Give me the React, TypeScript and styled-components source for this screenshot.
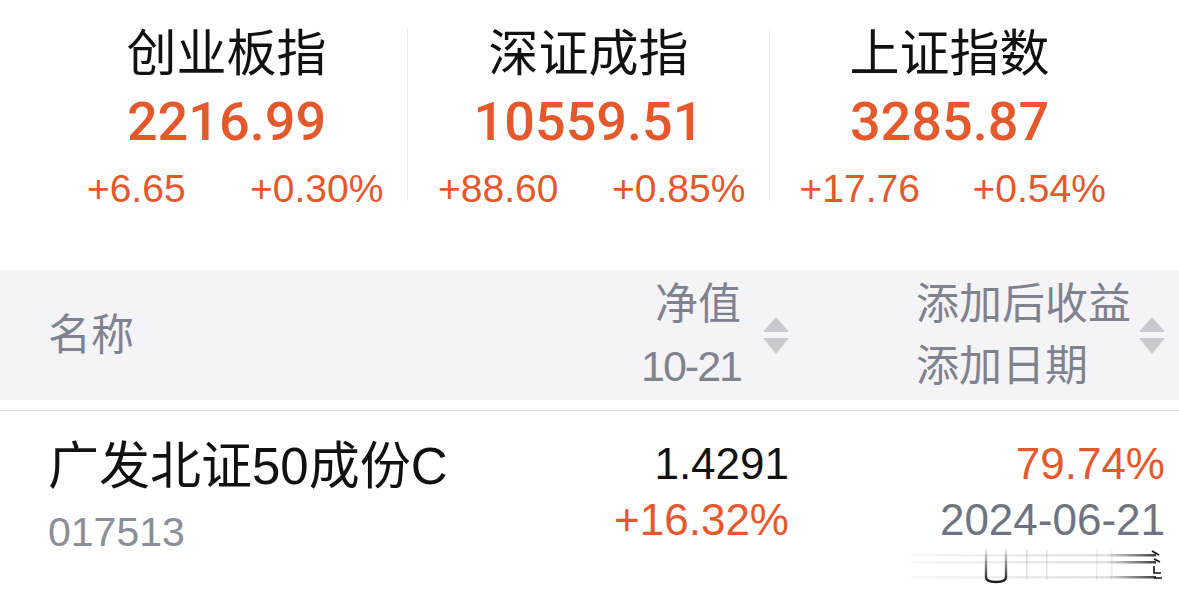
import styled, {createGlobalStyle} from 'styled-components';

const SANS = `"Liberation Sans", "Noto Sans CJK SC", sans-serif`;
const CJK = `"Noto Sans CJK SC", sans-serif`;
const RED = '#e5582b';

const GlobalStyle = createGlobalStyle`
    html, body {
        margin: 0;
        padding: 0;
        background: #fff;
    }
    body {
        font-family: ${SANS};
        width: 1179px;
        height: 597px;
        overflow: hidden;
    }
`;

interface IndexItem {
    name: string;
    value: string;
    change: string;
    percent: string;
}

const indices: IndexItem[] = [
    {name: '创业板指', value: '2216.99', change: '+6.65', percent: '+0.30%'},
    {name: '深证成指', value: '10559.51', change: '+88.60', percent: '+0.85%'},
    {name: '上证指数', value: '3285.87', change: '+17.76', percent: '+0.54%'},
];

const SortArrow = () => (
    <svg width='26' height='37' viewBox='0 0 26 37'>
        <polygon points='13,0 26,15 0,15' fill='#c9cad0' />
        <polygon points='0,21 26,21 13,37' fill='#c9cad0' />
    </svg>
);

// the blurred scrap of text under the last row
const Scrap = () => (
    <svg width='262' height='40' viewBox='0 0 262 40'>
        <defs>
            <linearGradient id='fade' x1='0' x2='1' y1='0' y2='0'>
                <stop offset='0' stopColor='#000' stopOpacity='0.03' />
                <stop offset='0.8' stopColor='#000' stopOpacity='0.12' />
                <stop offset='1' stopColor='#000' stopOpacity='0.75' />
            </linearGradient>
            <linearGradient id='stem' x1='0' x2='0' y1='0' y2='1'>
                <stop offset='0' stopColor='#000' stopOpacity='0.05' />
                <stop offset='1' stopColor='#000' stopOpacity='0.9' />
            </linearGradient>
        </defs>
        <rect x='5' y='8' width='245' height='2.5' fill='url(#fade)' />
        <rect x='5' y='15' width='245' height='2.5' fill='url(#fade)' />
        <rect x='5' y='30' width='245' height='2.5' fill='url(#fade)' />
        <rect x='120' y='4' width='1.5' height='30' fill='#000' opacity='0.1' />
        <rect x='140' y='4' width='1.5' height='30' fill='#000' opacity='0.1' />
        <rect x='190' y='4' width='1.5' height='30' fill='#000' opacity='0.07' />
        <rect x='205' y='4' width='1.5' height='30' fill='#000' opacity='0.07' />
        <path d='M80 3 V31 Q80 36 90 36 Q100 36 100 31 V3' fill='none' stroke='url(#stem)' strokeWidth='2.4' />
        <path d='M246 5 L253 9 M248 13 L254 16 M248 20 V27 H255 M248 32 H256' stroke='#111' strokeWidth='1.6' fill='none' />
    </svg>
);

const App = () => {
    return (
        <>
            <GlobalStyle />
            <Page>
                <IndexBar>
                    {indices.map((item, i) => (
                        <IndexCard key={item.name} $divided={i > 0}>
                            <IndexName>{item.name}</IndexName>
                            <IndexValue>{item.value}</IndexValue>
                            <ChangeRow>
                                <Change>{item.change}</Change>
                                <Change>{item.percent}</Change>
                            </ChangeRow>
                        </IndexCard>
                    ))}
                </IndexBar>

                <TableHead>
                    <HeadCell>
                        <HeadText>名称</HeadText>
                    </HeadCell>
                    <HeadCell $end $gap={22}>
                        <HeadStack $align='right'>
                            <HeadText>净值</HeadText>
                            <HeadText $tight>10-21</HeadText>
                        </HeadStack>
                        <SortArrow />
                    </HeadCell>
                    <HeadCell $end $gap={8}>
                        <HeadStack $align='left'>
                            <HeadText>添加后收益</HeadText>
                            <HeadText>添加日期</HeadText>
                        </HeadStack>
                        <SortArrow />
                    </HeadCell>
                </TableHead>

                <FundRow>
                    <NameCell>
                        <FundName>广发北证50成份C</FundName>
                        <FundCode>017513</FundCode>
                    </NameCell>
                    <ValueCell>
                        <Primary>1.4291</Primary>
                        <Secondary $tone='red'>+16.32%</Secondary>
                    </ValueCell>
                    <ValueCell>
                        <Primary $tone='red'>79.74%</Primary>
                        <Secondary $tone='gray'>2024-06-21</Secondary>
                        <ScrapWrap>
                            <Scrap />
                        </ScrapWrap>
                    </ValueCell>
                </FundRow>
            </Page>
        </>
    );
};

export default App;

const Page = styled.div`
    width: 1179px;
    height: 597px;
    background: #fff;
    overflow: hidden;
`;

const IndexBar = styled.div`
    display: grid;
    grid-template-columns: 362px 362px 360px;
    padding: 29px 48px 69px 45px;
`;

const IndexCard = styled.div<{$divided: boolean}>`
    display: flex;
    flex-direction: column;
    align-items: stretch;
    text-align: center;
    border-left: 1px solid ${({$divided}) => ($divided ? '#ececee' : 'transparent')};
`;

const IndexName = styled.div`
    font-family: ${CJK};
    font-size: 50px;
    line-height: 40px;
    color: #111;
`;

const IndexValue = styled.div`
    margin-top: 26px;
    font-family: Roboto, ${SANS};
    font-weight: 500;
    font-size: 54px;
    line-height: 54px;
    color: ${RED};
`;

const ChangeRow = styled.div`
    display: grid;
    grid-template-columns: 1fr 1fr;
    margin-top: 28px;
`;

const Change = styled.div`
    font-size: 39px;
    line-height: 24px;
    color: ${RED};
`;

const TableHead = styled.div`
    display: grid;
    grid-template-columns: 1fr 260px 376px;
    height: 130px;
    padding: 0 14px 0 48px;
    background: #f4f4f7;
`;

const HeadCell = styled.div<{$end?: boolean; $gap?: number}>`
    display: flex;
    align-items: center;
    justify-content: ${({$end}) => ($end ? 'flex-end' : 'flex-start')};
    gap: ${({$gap}) => $gap ?? 0}px;
`;

const HeadStack = styled.div<{$align: 'left' | 'right'}>`
    display: flex;
    flex-direction: column;
    text-align: ${({$align}) => $align};
`;

const HeadText = styled.div<{$tight?: boolean}>`
    font-size: 43px;
    line-height: 62px;
    letter-spacing: ${({$tight}) => ($tight ? '-2px' : '0')};
    color: #80838f;
`;

const FundRow = styled.div`
    display: grid;
    grid-template-columns: 1fr 260px 376px;
    margin-top: 10px;
    padding: 25px 14px 0 48px;
    border-top: 1px solid #dedee0;
`;

const NameCell = styled.div`
    display: flex;
    flex-direction: column;
`;

const FundName = styled.div`
    font-size: 51px;
    line-height: 62px;
    color: #111;
`;

const FundCode = styled.div`
    font-size: 41px;
    line-height: 68px;
    color: #8b8e99;
`;

const ValueCell = styled.div`
    display: flex;
    flex-direction: column;
    align-items: flex-end;
`;

const toneColor = (tone?: 'red' | 'gray') =>
    tone === 'red' ? RED : tone === 'gray' ? '#6f7381' : '#111';

const Primary = styled.div<{$tone?: 'red' | 'gray'}>`
    font-size: 44px;
    line-height: 56px;
    color: ${({$tone}) => toneColor($tone)};
`;

const Secondary = styled(Primary)``;

const ScrapWrap = styled.div`
    margin-top: -2px;
    margin-right: -3px;
    line-height: 0;
`;
